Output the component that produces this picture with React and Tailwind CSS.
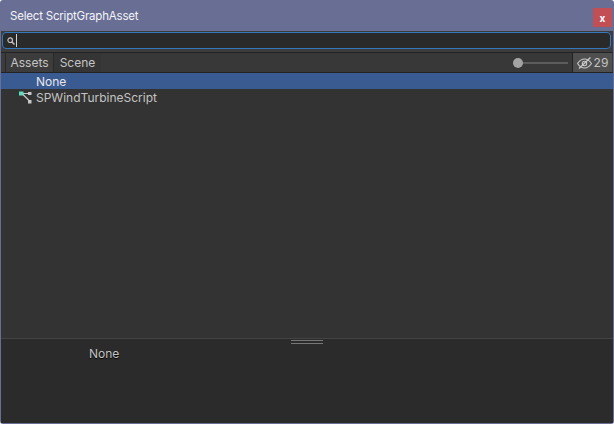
export default function App() {
  return (
    <div className="w-[614px] h-[424px] flex flex-col bg-[#696e94] px-px pb-px rounded-[3px] overflow-hidden font-['Inter',sans-serif] text-[12px] leading-[16px]">
      <div className="h-[31px] shrink-0 flex items-start justify-between pl-[9px] pr-px">
        <span className="mt-[8px] text-[#f4f4f8] text-[11.5px] tracking-[-0.2px]">Select ScriptGraphAsset</span>
        <div className="mt-[8px] w-[19px] h-[19px] bg-[#c24f55] flex items-center justify-center text-white text-[10px] font-bold leading-none">x</div>
      </div>
      <div className="h-[21px] shrink-0 bg-[#3c3c3c] pt-[1px] pl-px pr-[2px]">
        <div className="h-[17px] bg-[#2a2a2a] border border-[#3478c0] rounded-[4px] flex items-center pl-[4px]">
          <svg width="8" height="8" viewBox="0 0 8 8" fill="none" stroke="#c4c4c4" strokeWidth="1.2">
            <circle cx="3.2" cy="3.2" r="2.3" />
            <path d="M5 5l2.5 2.5" strokeWidth="1.5" />
          </svg>
          <div className="ml-[1px] w-px h-[13px] bg-[#d2d2d2]" />
        </div>
      </div>
      <div className="h-[21px] shrink-0 bg-[#3c3c3c] border-t border-t-[#232323] border-b border-b-[#232323] flex items-stretch pl-[4px]">
        <div className="w-[49px] bg-[#3c3c3c] border-x border-[#2a2a2a] flex items-center justify-center text-[#c4c4c4]">Assets</div>
        <div className="w-[47px] bg-[#353535] flex items-center justify-center text-[#c4c4c4]">Scene</div>
        <div className="flex-1 bg-[#383838] flex items-center justify-end pr-[4px]">
          <div className="relative w-[55px] h-[2px] bg-[#5c5c5c]">
            <div className="absolute left-0 top-[-4px] w-[10px] h-[10px] rounded-full bg-[#a3a3a3]" />
          </div>
        </div>
        <div className="w-[40px] mr-px bg-[#4f4f4f] border-l border-[#232323] flex items-center justify-center gap-[2px] text-[#c4c4c4]">
          <svg width="15" height="12" viewBox="0 0 15 12" fill="none" stroke="#c8c8c8" strokeWidth="1.1">
            <path d="M.5 6.500C2.500 3.500 4.500 2 7.500 2s5 1.500 7 4.500C12.500 9.500 10.500 11 7.500 11S2.500 9.500 .5 6.500z" />
            <circle cx="7.500" cy="6.500" r="2.200" />
            <path d="M2 11.500L13.500 .5" strokeWidth="1.300" />
          </svg>
          <span>29</span>
        </div>
      </div>
      <div className="flex-1 bg-[#333333] flex flex-col text-[#c4c4c4]">
        <div className="h-[16px] bg-[#3a5a92] pl-[35px] text-[#e8e8e8] leading-[17px]">None</div>
        <div className="h-[17px] flex items-center pl-[18px] gap-[4px]">
          <svg width="13" height="13" viewBox="0 0 13 13" fill="none" className="shrink-0">
            <path d="M3 2.500H11M3 2.500L11 10.500" stroke="#c8c8c8" strokeWidth="1.200" />
            <rect x="0" y="0.500" width="4.500" height="4" fill="#5fe0bd" />
            <rect x="9" y="1" width="3.500" height="3" fill="#c8c8c8" />
            <rect x="9" y="9" width="3.500" height="3.500" fill="#c8c8c8" />
          </svg>
          <span>SPWindTurbineScript</span>
        </div>
      </div>
      <div className="h-[85px] shrink-0 bg-[#2b2b2b] border-t border-[#444444] flex flex-col">
        <div className="flex flex-col items-center gap-[2px] pt-[1px]">
          <div className="w-[32px] h-px bg-[#777777]" />
          <div className="w-[32px] h-px bg-[#777777]" />
        </div>
        <div className="pl-[88px] mt-[2px] text-[#c4c4c4] [text-shadow:0_1px_1px_#000]">None</div>
      </div>
    </div>
  );
}
